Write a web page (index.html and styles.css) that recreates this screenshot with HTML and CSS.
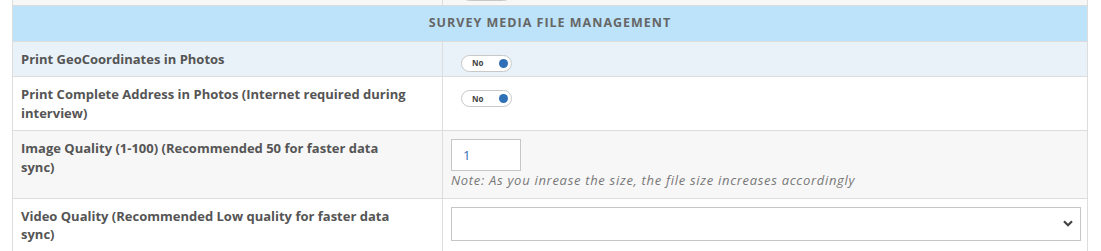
FILE: index.html
```html
<!DOCTYPE html>
<html lang="en">
<head>
  <meta charset="UTF-8">
  <title>Survey Settings</title>
  <link rel="stylesheet" href="styles.css">
</head>
<body>
  <div class="settings">
    <table class="settings-table">
      <tr class="row-gray">
        <td class="label"></td>
        <td class="value"><span class="toggle"><span class="toggle-text"></span><span class="toggle-dot"></span></span></td>
      </tr>
      <tr class="section-head">
        <td colspan="2">SURVEY MEDIA FILE MANAGEMENT</td>
      </tr>
      <tr class="row-blue">
        <td class="label">Print GeoCoordinates in Photos</td>
        <td class="value"><span class="toggle"><span class="toggle-text">No</span><span class="toggle-dot"></span></span></td>
      </tr>
      <tr>
        <td class="label">Print Complete Address in Photos (Internet required during interview)</td>
        <td class="value"><span class="toggle"><span class="toggle-text">No</span><span class="toggle-dot"></span></span></td>
      </tr>
      <tr class="row-gray">
        <td class="label">Image Quality (1-100) (Recommended 50 for faster data<br>sync)</td>
        <td class="value">
          <input class="num-input" type="text" value="1">
          <div class="note">Note: As you inrease the size, the file size increases accordingly</div>
        </td>
      </tr>
      <tr>
        <td class="label">Video Quality (Recommended Low quality for faster data<br>sync)</td>
        <td class="value">
          <div class="select-box">
            <svg class="chevron" width="10" height="7" viewBox="0 0 10 7"><path d="M1 1.2 L5 5.2 L9 1.2" fill="none" stroke="#444" stroke-width="2.2"/></svg>
          </div>
        </td>
      </tr>
    </table>
  </div>
</body>
</html>
```

FILE: styles.css
```css
body, html {
  margin: 0;
  padding: 0;
  background: #fff;
  font-family: "Open Sans", "Liberation Sans", sans-serif;
  overflow: hidden;
}

.settings {
  margin: -30px 13px 0 12px;
}

.settings-table {
  width: 100%;
  border-collapse: collapse;
  table-layout: fixed;
  font-size: 13px;
  line-height: 18.5px;
  color: #555;
}

.settings-table td {
  border: 1px solid #ddd;
  padding: 8px;
  vertical-align: top;
}

.settings-table td.label {
  width: 413px;
  height: 18px;
  font-weight: 700;
}

.section-head td {
  background: #bde3fa;
  text-align: center;
  font-size: 12.5px;
  font-weight: 700;
  color: #666;
  letter-spacing: 1px;
}

.row-blue td {
  background: #e9f2f9;
}

.row-gray td {
  background: #f7f7f7;
}

.toggle {
  display: flex;
  align-items: center;
  justify-content: space-between;
  box-sizing: border-box;
  width: 51px;
  height: 17px;
  margin: 5px 0 -4px 10px;
  padding: 0 3px 0 10px;
  border: 1px solid #c8c8c8;
  border-radius: 9px;
  background: #fff;
}

.toggle-text {
  font-size: 8px;
  font-weight: 700;
  color: #444;
  line-height: 1;
}

.toggle-dot {
  width: 9px;
  height: 9px;
  border-radius: 50%;
  background: #2f70b6;
}

.num-input {
  display: block;
  box-sizing: border-box;
  width: 70px;
  height: 32px;
  margin: 0;
  padding: 0 11px;
  border: 1px solid #c6c6c6;
  font-family: inherit;
  font-size: 13px;
  color: #2f70b6;
  outline: none;
}

.note {
  font-size: 13px;
  font-style: italic;
  color: #777;
  letter-spacing: 0.7px;
}

.select-box {
  display: flex;
  align-items: center;
  justify-content: flex-end;
  box-sizing: border-box;
  width: 630px;
  height: 34px;
  padding-right: 7px;
  border: 1px solid #c6c6c6;
  background: #fff;
}
```
